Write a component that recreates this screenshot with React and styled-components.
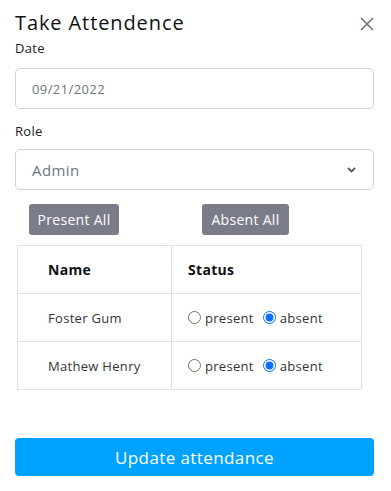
import React, { useState } from "react";
import styled, { createGlobalStyle } from "styled-components";

const GlobalStyle = createGlobalStyle`
  body {
    margin: 0;
    background: #fff;
    font-family: "Open Sans", "Liberation Sans", sans-serif;
    color: #212529;
  }
`;

const Modal = styled.div`
  width: 391px;
  padding: 6px 17px 14px 15px;
  box-sizing: border-box;
`;

const Header = styled.div`
  display: flex;
  justify-content: space-between;
  align-items: center;
  height: 32px;
`;

const Title = styled.h2`
  margin: 0;
  font-size: 20px;
  font-weight: 400;
  color: #111;
  letter-spacing: 0.9px;
`;

const CloseButton = styled.button`
  border: 0;
  background: none;
  padding: 0;
  margin-top: 4px;
  width: 14px;
  height: 14px;
  display: flex;
  cursor: pointer;
`;

const Label = styled.label`
  display: block;
  font-size: 13px;
  font-weight: 500;
  line-height: 20px;
  color: #222;
  letter-spacing: 0.3px;
  margin-top: ${({ top }) => top}px;
`;

const Field = styled.div`
  height: 41px;
  margin-top: ${({ top }) => top}px;
  border: 1px solid #ced4da;
  border-radius: 5px;
  box-sizing: border-box;
  display: flex;
  align-items: center;
  justify-content: space-between;
  padding: 0 17px 0 16px;
  font-size: ${({ big }) => (big ? 15 : 13)}px;
  letter-spacing: 0.4px;
  color: #6c757d;
`;

const ButtonRow = styled.div`
  display: flex;
  margin: 14px 0 0 14px;
  gap: 83px;
`;

const GrayButton = styled.button`
  width: ${({ w }) => w}px;
  height: 31px;
  padding: 0;
  border: 0;
  border-radius: 3px;
  background: #7a7c89;
  color: #fff;
  font-family: inherit;
  font-size: 14px;
  font-weight: 500;
  letter-spacing: 0.3px;
`;

const Table = styled.table`
  margin: 10px 0 0 2px;
  width: 345px;
  table-layout: fixed;
  border-collapse: collapse;
  font-size: 13px;
`;

const Col = styled.col`
  width: ${({ w }) => w};
`;

const Cell = styled.td`
  border: 1px solid #dee2e6;
  height: 47px;
  padding: 0 0 0 ${({ first }) => (first ? 30 : 16)}px;
  font-weight: ${({ head }) => (head ? 700 : 400)};
  font-size: ${({ head }) => (head ? 14 : 13)}px;
  color: ${({ head }) => (head ? "#111" : "#333")};
  letter-spacing: 0.3px;
  vertical-align: middle;
`;

const Status = styled.div`
  display: flex;
  align-items: center;
  gap: 9px;
`;

const Choice = styled.label`
  display: flex;
  align-items: center;
  gap: 4px;
  cursor: pointer;
`;

const Radio = styled.input`
  margin: 0;
  width: 13px;
  height: 13px;
  accent-color: #0d6efd;
`;

const UpdateButton = styled.button`
  display: block;
  width: 359px;
  height: 38px;
  margin-top: 48px;
  border: 0;
  border-radius: 4px;
  background: #00a2ff;
  color: #fff;
  font-family: inherit;
  font-size: 17px;
  letter-spacing: 0.4px;
  cursor: pointer;
`;

const students = [
  { id: 1, name: "Foster Gum" },
  { id: 2, name: "Mathew Henry" },
];

const App = () => {
  const [status, setStatus] = useState({ 1: "absent", 2: "absent" });

  const setAll = (value) => setStatus({ 1: value, 2: value });

  return (
    <>
      <GlobalStyle />
      <Modal>
        <Header>
          <Title>Take Attendence</Title>
          <CloseButton aria-label="close">
            <svg width="14" height="14" viewBox="0 0 14 14">
              <path d="M1 1L13 13M13 1L1 13" stroke="#6f7380" strokeWidth="1.6" />
            </svg>
          </CloseButton>
        </Header>
        <Label top={0}>Date</Label>
        <Field top={10}>09/21/2022</Field>
        <Label top={12}>Role</Label>
        <Field top={8} big>
          Admin
          <svg width="9" height="6" viewBox="0 0 9 6">
            <path d="M1 1L4.5 4.5L8 1" stroke="#555a66" strokeWidth="1.8" fill="none" />
          </svg>
        </Field>
        <ButtonRow>
          <GrayButton w={90} onClick={() => setAll("present")}>Present All</GrayButton>
          <GrayButton w={87} onClick={() => setAll("absent")}>Absent All</GrayButton>
        </ButtonRow>
        <Table>
          <colgroup>
            <Col w="154px" />
            <Col w="auto" />
          </colgroup>
          <tbody>
            <tr>
              <Cell first head>Name</Cell>
              <Cell head>Status</Cell>
            </tr>
            {students.map((s) => (
              <tr key={s.id}>
                <Cell first>{s.name}</Cell>
                <Cell>
                  <Status>
                    {["present", "absent"].map((v) => (
                      <Choice key={v}>
                        <Radio
                          type="radio"
                          name={`st-${s.id}`}
                          checked={status[s.id] === v}
                          onChange={() => setStatus({ ...status, [s.id]: v })}
                        />
                        {v}
                      </Choice>
                    ))}
                  </Status>
                </Cell>
              </tr>
            ))}
          </tbody>
        </Table>
        <UpdateButton>Update attendance</UpdateButton>
      </Modal>
    </>
  );
};

export default App;
